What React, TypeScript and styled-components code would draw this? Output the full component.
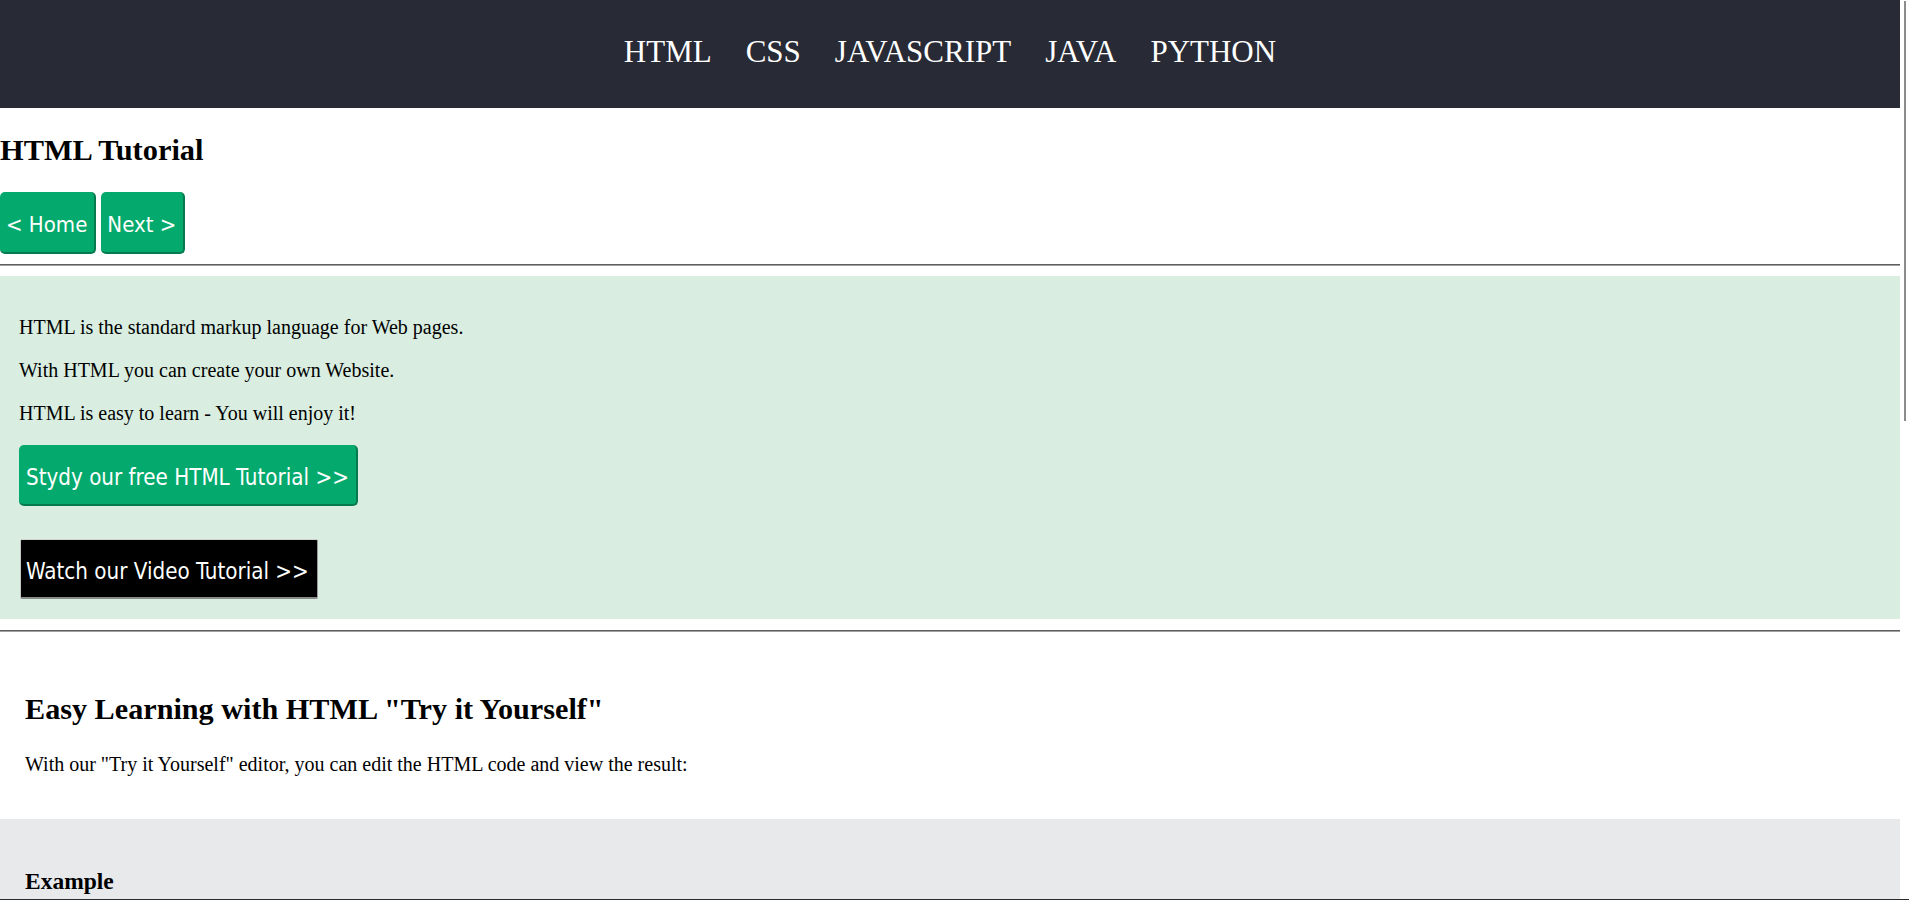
import styled, { createGlobalStyle } from "styled-components";

const GlobalStyle = createGlobalStyle`
    html, body {
        height: 100%;
        overflow: hidden;
    }
    body {
        margin: 0;
        color: #000000;
        font-family: "Liberation Serif", "Times New Roman", serif;
        /* the thin scrollbar thumb in the right gutter */
        background:
            linear-gradient(#8c8c8c, #8c8c8c) no-repeat right 3px top 1px / 2px 420px,
            #ffffff;
    }
`

const Page = styled.div`
    width: calc(100% - 9px);
    height: 100vh;
    overflow-y: auto;
    scrollbar-width: none;
    background: #ffffff;
    &::-webkit-scrollbar {
        display: none;
    }
`

const Header = styled.header`
    box-sizing: border-box;
    height: 108px;
    padding-top: 34px;
    background-color: #282a35;
`

const Nav = styled.nav`
    display: flex;
    justify-content: center;
    gap: 34px;
`

const NavLink = styled.a`
    color: #ffffff;
    font-size: 31px;
    line-height: 35px;
    text-decoration: none;
`

const Intro = styled.section`
    padding-top: 25px;
`

const Title = styled.h1`
    margin: 0;
    font-size: 30.4px;
    font-weight: bold;
    line-height: 35px;
`

const ButtonRow = styled.div`
    display: flex;
    gap: 5px;
    margin-top: 24px;
`

const GreenButton = styled.a<{ $big?: boolean }>`
    box-sizing: border-box;
    display: inline-flex;
    align-items: center;
    height: ${({ $big }) => ($big ? "61px" : "62px")};
    padding: 5px 7px 0 ${({ $big }) => ($big ? "7px" : "6px")};
    background-color: #04aa6d;
    color: #ffffff;
    font-family: "DejaVu Sans Condensed", "Liberation Sans", sans-serif;
    font-size: ${({ $big }) => ($big ? "22.2px" : "22px")};
    text-decoration: none;
    border-radius: 5px;
    border-right: 2px solid #067a4f;
    border-bottom: 2px solid #067a4f;
`

const BlackButton = styled.a`
    box-sizing: border-box;
    display: inline-flex;
    align-items: center;
    height: 60px;
    margin: 33px 0 0 1px;
    padding: 5px 8px 0 5px;
    background-color: #000000;
    color: #ffffff;
    font-family: "DejaVu Sans Condensed", "Liberation Sans", sans-serif;
    font-size: 22.2px;
    text-decoration: none;
    border-radius: 2px;
    border-top: 1px solid #d2d2d2;
    border-left: 1px solid #c4c4c4;
    border-right: 1px solid #9a9a9a;
    border-bottom: 2px solid #8a8a8a;
`

const Divider = styled.hr<{ $gap: number }>`
    margin: ${({ $gap }) => $gap}px 0;
    height: 0;
    border: none;
    border-top: 1px solid #5e5e5e;
    border-bottom: 1px solid #a0a0a0;
`

const Promo = styled.section`
    display: flex;
    flex-direction: column;
    align-items: flex-start;
    padding: 40px 19px 20px;
    background-color: #d9eee1;
`

const PromoText = styled.p`
    margin: 0 0 21px;
    font-size: 20px;
    line-height: 22px;
`

const Learning = styled.section`
    padding: 49px 25px 43px;
`

const SectionTitle = styled.h2`
    margin: 0;
    font-size: 30.2px;
    font-weight: bold;
    line-height: 34px;
`

const BodyText = styled.p`
    margin: 26.5px 0 0;
    font-size: 20px;
    line-height: 23px;
`

const ExampleArea = styled.section`
    box-sizing: border-box;
    min-height: 1105px;
    padding: 49px 25px 40px;
    background-color: #e7e9eb;
`

const ExampleTitle = styled.h3`
    margin: 0;
    font-size: 23.5px;
    font-weight: bold;
    line-height: 27px;
`

const CodeBox = styled.div`
    margin-top: 40px;
    padding: 16px 20px;
    background-color: #ffffff;
    border-left: 4px solid #04aa6d;
    font-family: "Liberation Mono", "Courier New", monospace;
    font-size: 15px;
    line-height: 1.5;
    white-space: pre;
`

const WindowEdge = styled.div`
    position: fixed;
    left: 0;
    right: 0;
    bottom: 0;
    height: 1px;
    background-color: #2b2b2b;
`

const links = ["HTML", "CSS", "JAVASCRIPT", "JAVA", "PYTHON"];

const sample = `<!DOCTYPE html>
<html>
<head>
<title>Page Title</title>
</head>
<body>

<h1>This is a Heading</h1>
<p>This is a paragraph.</p>

</body>
</html>`;

const App = () => {
    return <>
        <GlobalStyle />
        <Page>
            <Header>
                <Nav>
                    {links.map((link) => (
                        <NavLink key={link} href="#">{link}</NavLink>
                    ))}
                </Nav>
            </Header>
            <Intro>
                <Title>HTML Tutorial</Title>
                <ButtonRow>
                    <GreenButton href="#">&lt; Home</GreenButton>
                    <GreenButton href="#">Next &gt;</GreenButton>
                </ButtonRow>
            </Intro>
            <Divider $gap={10} />
            <Promo>
                <PromoText>HTML is the standard markup language for Web pages.</PromoText>
                <PromoText>With HTML you can create your own Website.</PromoText>
                <PromoText>HTML is easy to learn - You will enjoy it!</PromoText>
                <GreenButton $big href="#">Stydy our free HTML Tutorial &gt;&gt;</GreenButton>
                <BlackButton href="#">Watch our Video Tutorial &gt;&gt;</BlackButton>
            </Promo>
            <Divider $gap={11} />
            <Learning>
                <SectionTitle>Easy Learning with HTML "Try it Yourself"</SectionTitle>
                <BodyText>With our "Try it Yourself" editor, you can edit the HTML code and view the result:</BodyText>
            </Learning>
            <ExampleArea>
                <ExampleTitle>Example</ExampleTitle>
                <CodeBox>{sample}</CodeBox>
            </ExampleArea>
        </Page>
        <WindowEdge />
    </>
}

export default App;
